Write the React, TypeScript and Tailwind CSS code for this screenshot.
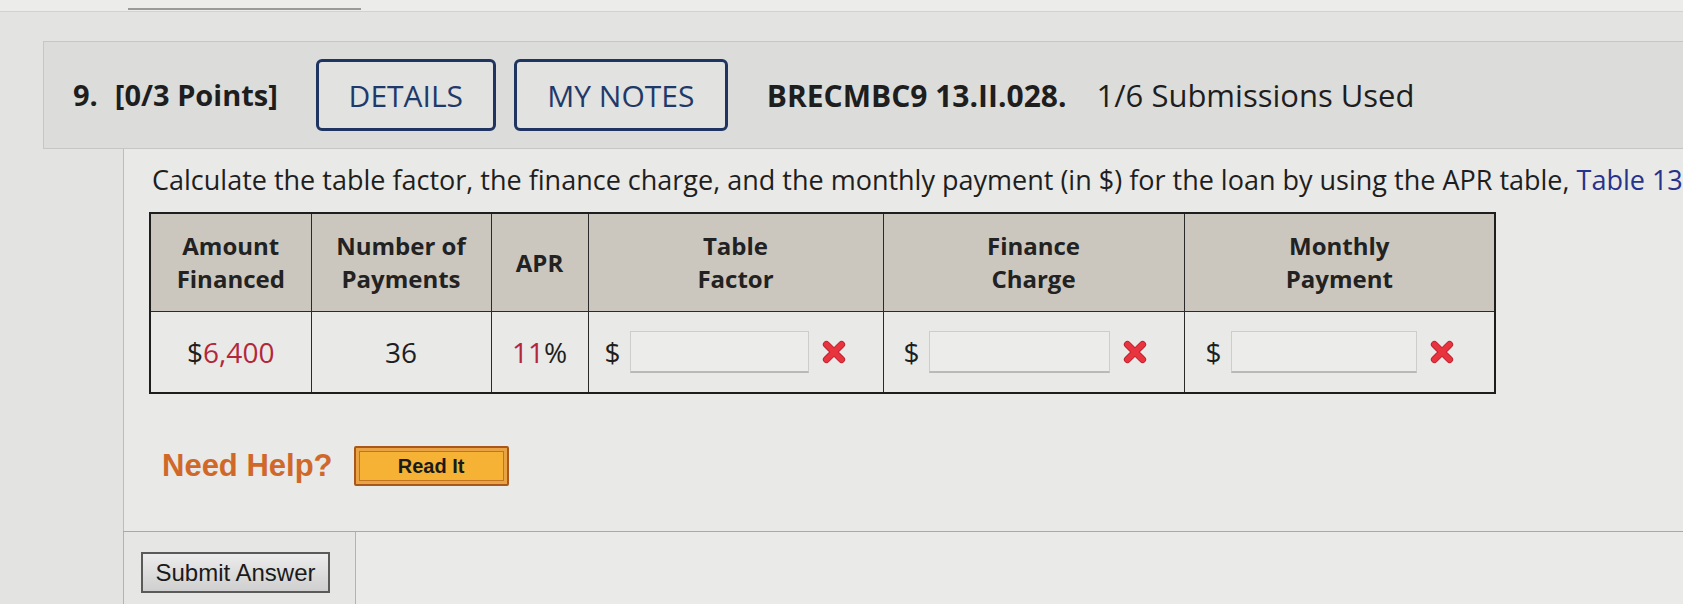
import React from "react";

const sans = { fontFamily: '"Open Sans", "Noto Sans", sans-serif' };
const arial = { fontFamily: '"Liberation Sans", Arial, sans-serif' };

function WrongMark() {
  return (
    <svg width="26" height="26" viewBox="0 0 24 24" className="shrink-0">
      <path d="M5 5 L19 19 M19 5 L5 19" stroke="#b8222e" strokeWidth="6.5" strokeLinecap="round" fill="none" />
      <path d="M5 5 L19 19 M19 5 L5 19" stroke="#e8343f" strokeWidth="5" strokeLinecap="round" fill="none" />
    </svg>
  );
}

function AnswerCell({ pad, width }: { pad: string; width: string }) {
  return (
    <td className="border-[1.5px] border-[#2a2a2a] p-0">
      <div className={`flex items-center ${pad}`}>
        <span className="text-[28px] text-[#1e1e1e]">$</span>
        <div className={`ml-[9px] h-[42px] ${width} border border-[#cdcdcb] border-b-2 border-b-[#b9b9b7] bg-[#ececea]`} />
        <span className="ml-[12px]">
          <WrongMark />
        </span>
      </div>
    </td>
  );
}

function HeadCell({ w, children }: { w: string; children: React.ReactNode }) {
  return (
    <th className={`${w} border-[1.5px] border-[#2a2a2a] bg-[#cbc7bf] text-center align-middle text-[24px] font-bold leading-[33px] text-[#222]`}>
      {children}
    </th>
  );
}

export default function App() {
  return (
    <div className="relative h-[604px] w-full overflow-hidden bg-[#e3e3e1] text-[#1e1e1e]" style={sans}>
      {/* remains of the previous question */}
      <div className="h-[12px] border-b border-[#d2d2d0] bg-[#ececea]">
        <div className="ml-[128px] h-[10px] w-[233px] border-b-2 border-[#9a9a98]" />
      </div>

      {/* question header */}
      <div className="ml-[43px] mt-[29px] flex h-[108px] items-center overflow-hidden whitespace-nowrap border-y border-l border-[#c6c6c4] bg-[#dcdcda] pl-[29px]">
        <span className="text-[29px] font-bold">9.</span>
        <span className="ml-[17px] text-[29px] font-bold">[0/3 Points]</span>
        <button className="ml-[38px] flex h-[72px] w-[180px] shrink-0 items-center justify-center rounded-[6px] border-[3px] border-[#1f3461] bg-[#e2e2e0] text-[30px] text-[#1f3a6a]">
          DETAILS
        </button>
        <button className="ml-[18px] flex h-[72px] w-[214px] shrink-0 items-center justify-center rounded-[6px] border-[3px] border-[#1f3461] bg-[#e2e2e0] text-[30px] text-[#1f3a6a]">
          MY NOTES
        </button>
        <span className="ml-[39px] text-[30px] font-bold">BRECMBC9 13.II.028.</span>
        <span className="ml-[30px] text-[31px]">1/6 Submissions Used</span>
      </div>

      {/* question body */}
      <div className="ml-[123px] h-[382px] border-l border-[#bdbdbb] bg-[#e9e9e7] pl-[28px] pt-[14px]">
        <p className="overflow-hidden whitespace-nowrap text-[27px] leading-[34px] text-[#1e1e1e]">
          Calculate the table factor, the finance charge, and the monthly payment (in $) for the loan by using the APR table,{" "}
          <span className="text-[#26338c]">Table 13-1</span>.
        </p>

        <table className="-ml-[3px] mt-[15px] border-collapse border-2 border-[#1e1e1e]">
          <thead>
            <tr className="h-[98px]">
              <HeadCell w="w-[161px]">
                Amount
                <br />
                Financed
              </HeadCell>
              <HeadCell w="w-[180px]">
                Number of
                <br />
                Payments
              </HeadCell>
              <HeadCell w="w-[97px]">APR</HeadCell>
              <HeadCell w="w-[295px]">
                Table
                <br />
                Factor
              </HeadCell>
              <HeadCell w="w-[301px]">
                Finance
                <br />
                Charge
              </HeadCell>
              <HeadCell w="w-[311px]">
                Monthly
                <br />
                Payment
              </HeadCell>
            </tr>
          </thead>
          <tbody>
            <tr className="h-[82px] text-[28px]">
              <td className="border-[1.5px] border-[#2a2a2a] text-center">
                $<span className="text-[#b3273a]">6,400</span>
              </td>
              <td className="border-[1.5px] border-[#2a2a2a] text-center">36</td>
              <td className="border-[1.5px] border-[#2a2a2a] text-center">
                <span className="text-[#b3273a]">11</span>%
              </td>
              <AnswerCell pad="pl-[16px]" width="w-[179px]" />
              <AnswerCell pad="pl-[20px]" width="w-[181px]" />
              <AnswerCell pad="pl-[21px]" width="w-[186px]" />
            </tr>
          </tbody>
        </table>

        <div className="ml-[10px] mt-[49px] flex items-center" style={arial}>
          <span className="text-[31px] font-bold text-[#d0682a]">Need Help?</span>
          <button className="ml-[21px] h-[40px] w-[155px] rounded-[2px] border-2 border-[#a9581c] bg-[#e9a244] p-[3px]">
            <span className="flex h-full w-full items-center justify-center border border-[#c27422] bg-[#f5b234] text-[20px] font-bold text-[#1a1a1a]">
              Read It
            </span>
          </button>
        </div>
      </div>

      {/* footer */}
      <div className="ml-[123px] flex h-[100px] border-t border-[#a9a9a7]">
        <div className="w-[233px] border-l border-r border-[#b3b3b1] bg-[#e6e6e4] pl-[17px] pt-[20px]">
          <button
            className="h-[41px] w-[189px] border-2 border-[#5a5a5a] bg-gradient-to-b from-[#ececec] to-[#cfcfcf] text-[24px] text-[#1a1a1a]"
            style={arial}
          >
            Submit Answer
          </button>
        </div>
        <div className="flex-1 bg-[#eaeae8]" />
      </div>
    </div>
  );
}
